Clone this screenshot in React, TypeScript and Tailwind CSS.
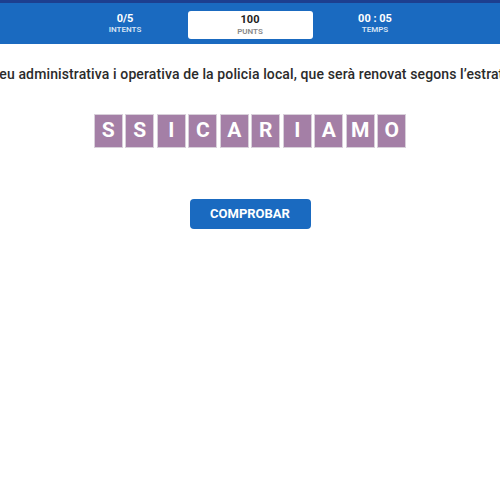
const letters = ["S", "S", "I", "C", "A", "R", "I", "A", "M", "O"];

function Stat({ value, label }: { value: string; label: string }) {
  return (
    <div className="flex w-[125px] flex-col items-center leading-none text-white">
      <span className="text-[11px] font-bold">{value}</span>
      <span className="mt-[2px] text-[8px] font-semibold uppercase text-[#d6e4f5]">{label}</span>
    </div>
  );
}

export default function App() {
  return (
    <div className="flex h-[500px] w-[500px] flex-col bg-white font-['Roboto',sans-serif]">
      {/* header */}
      <div className="border-t-[3px] border-[#1d3f8f] bg-[#1a6ac0]">
        <div className="flex h-[41px] items-center justify-center">
          <Stat value="0/5" label="Intents" />
          <div className="mt-[2px] flex h-[28px] w-[125px] flex-col items-center justify-center rounded-[3px] bg-white leading-none">
            <span className="text-[11px] font-bold text-[#222]">100</span>
            <span className="mt-[3px] text-[8px] font-semibold uppercase text-[#888]">Punts</span>
          </div>
          <Stat value="00 : 05" label="Temps" />
        </div>
      </div>

      {/* sentence */}
      <div className="mt-[20px] flex overflow-hidden">
        <p className="ml-[-8px] whitespace-nowrap text-[14px] font-medium tracking-[0.12px] text-[#2b2b2b]">
          seu administrativa i operativa de la policia local, que serà renovat segons l’estratègia
        </p>
      </div>

      {/* letters */}
      <div className="mt-[29px] flex justify-center gap-[2.5px]">
        {letters.map((l, i) => (
          <div
            key={i}
            className="flex h-[34px] w-[29px] items-center justify-center border border-[#d8d0da] bg-[#a47fa6] text-[21px] font-bold text-white"
          >
            {l}
          </div>
        ))}
      </div>

      {/* button */}
      <div className="mt-[51px] flex justify-center">
        <button className="h-[30px] w-[121px] rounded-[4px] bg-[#1a6ac0] text-[13px] font-bold text-white">
          COMPROBAR
        </button>
      </div>
    </div>
  );
}
